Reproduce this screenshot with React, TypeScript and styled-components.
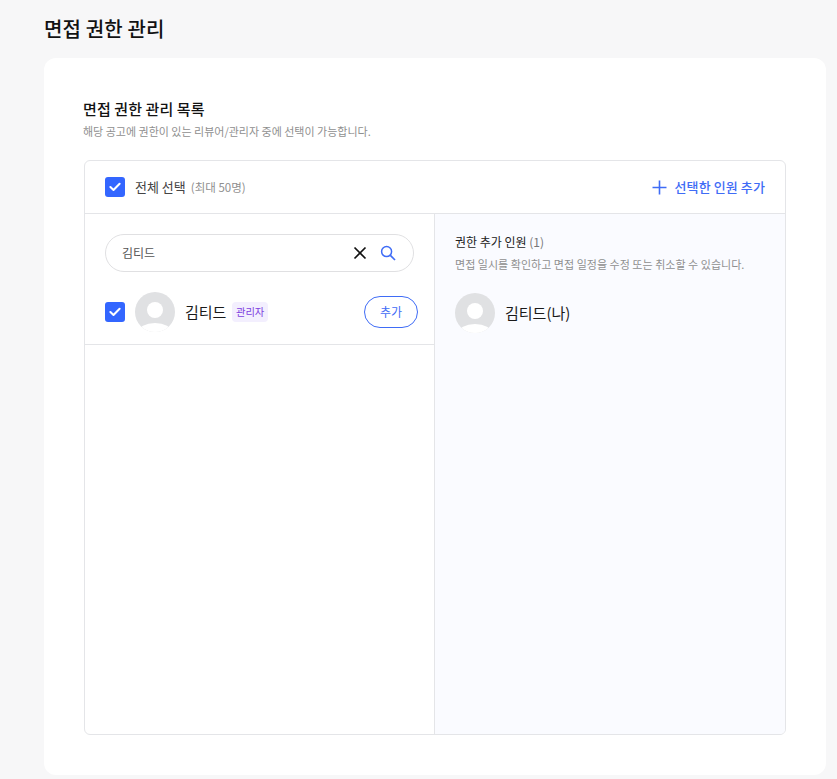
import React from 'react';
import styled, { createGlobalStyle } from 'styled-components';

const GlobalStyle = createGlobalStyle`
  html, body {
    margin: 0;
    padding: 0;
    background: #f7f7f8;
    font-family: 'Noto Sans CJK KR', 'Noto Sans', sans-serif;
    color: #121212;
  }
  * {
    box-sizing: border-box;
  }
`;

const Page = styled.div`
  width: 837px;
  height: 779px;
  padding: 0 11px 4px 44px;
  display: flex;
  flex-direction: column;
  overflow: hidden;
`;

const PageTitle = styled.h1`
  margin: 0;
  height: 58px;
  padding-top: 14px;
  font-size: 20px;
  line-height: 30px;
  font-weight: 500;
  letter-spacing: 0.15px;
`;

const Card = styled.main`
  flex: 1;
  background: #fff;
  border-radius: 12px;
  padding: 40px 40px 40px;
  display: flex;
  flex-direction: column;
`;

const SectionTitle = styled.h2`
  margin: 0 0 0 -1px;
  font-size: 15px;
  line-height: 22px;
  font-weight: 500;
  letter-spacing: 0.1px;
`;

const SectionHint = styled.p`
  margin: 2px 0 0 -1px;
  font-size: 11px;
  line-height: 18px;
  color: #8f8f8f;
  letter-spacing: 0;
`;

const Panel = styled.section`
  margin-top: 20px;
  flex: 1;
  border: 1px solid #e4e5e8;
  border-radius: 6px;
  display: flex;
  flex-direction: column;
  overflow: hidden;
`;

const PanelHeader = styled.header`
  height: 53px;
  flex: none;
  border-bottom: 1px solid #e4e5e8;
  padding: 0 20px;
  display: flex;
  align-items: center;
  justify-content: space-between;
`;

const SelectAll = styled.div`
  display: flex;
  align-items: center;
  gap: 10px;
`;

const SelectAllLabel = styled.span`
  font-size: 13px;
  line-height: 18px;
  color: #444;
`;

const Muted = styled.span`
  margin-left: 5px;
  font-size: 11.5px;
  color: #8f8f8f;
`;

const AddSelected = styled.button`
  border: 0;
  background: none;
  padding: 0;
  display: flex;
  align-items: center;
  gap: 8px;
  font-family: inherit;
  font-size: 13px;
  font-weight: 500;
  line-height: 18px;
  letter-spacing: 0.1px;
  color: #3f6cf6;
`;

const Columns = styled.div`
  flex: 1;
  display: flex;
  min-height: 0;
`;

const LeftPane = styled.div`
  width: 350px;
  flex: none;
  border-right: 1px solid #e4e5e8;
`;

const RightPane = styled.div`
  flex: 1;
  background: #fafbff;
  padding: 19px 20px;
`;

const SearchWrap = styled.div`
  padding: 20px 20px 0;
`;

const SearchBox = styled.div`
  width: 309px;
  height: 38px;
  border: 1px solid #e0e0e2;
  border-radius: 19px;
  padding: 0 17px 0 16px;
  display: flex;
  align-items: center;
  gap: 12px;
`;

const SearchInput = styled.input`
  flex: 1;
  min-width: 0;
  height: 34px;
  margin-top: -2px;
  border: 0;
  outline: 0;
  background: none;
  padding: 0;
  font-family: inherit;
  font-size: 12px;
  color: #555;
`;

const IconButton = styled.span`
  display: flex;
  width: 16px;
  height: 16px;
`;

const PersonRow = styled.div`
  height: 73px;
  padding: 7px 16px 0 20px;
  border-bottom: 1px solid #e4e5e8;
  display: flex;
  align-items: center;
`;

const Check = styled.span`
  width: 20px;
  height: 20px;
  flex: none;
  border-radius: 3px;
  background: #3366ff;
  display: flex;
  align-items: center;
  justify-content: center;
`;

const AvatarFrame = styled.span`
  width: 40px;
  height: 40px;
  flex: none;
  margin-right: 10px;
  display: block;
`;

const RowAvatar = styled.span`
  margin-left: 10px;
  display: flex;
`;

const PersonName = styled.span`
  font-size: 15px;
  line-height: 22px;
  color: #1a1a1a;
`;

const RoleBadge = styled.span`
  margin-left: 6px;
  height: 20px;
  padding: 0 3.5px;
  border-radius: 4px;
  background: #f3effe;
  color: #7f3fe0;
  font-size: 10.3px;
  line-height: 20px;
`;

const AddButton = styled.button`
  margin-left: auto;
  width: 54px;
  height: 32px;
  border: 1px solid #3f6cf6;
  border-radius: 16px;
  background: #fff;
  padding: 0;
  font-family: inherit;
  font-size: 12px;
  color: #3f6cf6;
`;

const PaneTitle = styled.h3`
  margin: 0;
  font-size: 12px;
  line-height: 18px;
  font-weight: 400;
  color: #222;
`;

const Count = styled.span`
  color: #777;
`;

const PaneHint = styled.p`
  margin: 4px 0 0;
  font-size: 11px;
  line-height: 18px;
  color: #8f8f8f;
  letter-spacing: 0.03px;
`;

const AddedPerson = styled.div`
  margin-top: 20px;
  display: flex;
  align-items: center;
`;

function CheckMark (): React.ReactElement {
  return (
    <Check>
      <svg width='12' height='10' viewBox='0 0 12 10' fill='none'>
        <path d='M1.4 5 L4.5 8 L10.6 1.8' stroke='#fff' strokeWidth='2' strokeLinecap='round' strokeLinejoin='round' />
      </svg>
    </Check>
  );
}

function Avatar ({ id }: { id: string }): React.ReactElement {
  return (
    <AvatarFrame>
      <svg width='40' height='40' viewBox='0 0 40 40'>
        <defs>
          <clipPath id={id}>
            <circle cx='20' cy='20' r='20' />
          </clipPath>
        </defs>
        <g clipPath={`url(#${id})`}>
          <rect width='40' height='40' fill='#e0e1e3' />
          <circle cx='20' cy='18' r='8' fill='#fff' />
          <ellipse cx='20' cy='40' rx='17' ry='9' fill='#fff' />
        </g>
      </svg>
    </AvatarFrame>
  );
}

export default function App (): React.ReactElement {
  return (
    <Page>
      <GlobalStyle />
      <PageTitle>면접 권한 관리</PageTitle>
      <Card>
        <SectionTitle>면접 권한 관리 목록</SectionTitle>
        <SectionHint>해당 공고에 권한이 있는 리뷰어/관리자 중에 선택이 가능합니다.</SectionHint>
        <Panel>
          <PanelHeader>
            <SelectAll>
              <CheckMark />
              <SelectAllLabel>
                전체 선택<Muted>(최대 50명)</Muted>
              </SelectAllLabel>
            </SelectAll>
            <AddSelected type='button'>
              <svg width='15' height='15' viewBox='0 0 15 15' fill='none'>
                <path d='M7.5 0.5 V14.5 M0.5 7.5 H14.5' stroke='#3f6cf6' strokeWidth='1.6' />
              </svg>
              선택한 인원 추가
            </AddSelected>
          </PanelHeader>
          <Columns>
            <LeftPane>
              <SearchWrap>
                <SearchBox>
                  <SearchInput readOnly value='김티드' />
                  <IconButton>
                    <svg width='16' height='16' viewBox='0 0 16 16' fill='none'>
                      <path d='M2.5 2.5 L13.5 13.5 M13.5 2.5 L2.5 13.5' stroke='#111' strokeWidth='1.7' />
                    </svg>
                  </IconButton>
                  <IconButton>
                    <svg width='16' height='16' viewBox='0 0 16 16' fill='none'>
                      <circle cx='6.6' cy='6.6' r='5' stroke='#3f6cf6' strokeWidth='1.5' />
                      <path d='M10.4 10.4 L15 15' stroke='#3f6cf6' strokeWidth='1.7' />
                    </svg>
                  </IconButton>
                </SearchBox>
              </SearchWrap>
              <PersonRow>
                <CheckMark />
                <RowAvatar>
                  <Avatar id='avatar-search' />
                </RowAvatar>
                <PersonName>김티드</PersonName>
                <RoleBadge>관리자</RoleBadge>
                <AddButton type='button'>추가</AddButton>
              </PersonRow>
            </LeftPane>
            <RightPane>
              <PaneTitle>
                권한 추가 인원 <Count>(1)</Count>
              </PaneTitle>
              <PaneHint>면접 일시를 확인하고 면접 일정을 수정 또는 취소할 수 있습니다.</PaneHint>
              <AddedPerson>
                <Avatar id='avatar-added' />
                <PersonName>김티드(나)</PersonName>
              </AddedPerson>
            </RightPane>
          </Columns>
        </Panel>
      </Card>
    </Page>
  );
}
